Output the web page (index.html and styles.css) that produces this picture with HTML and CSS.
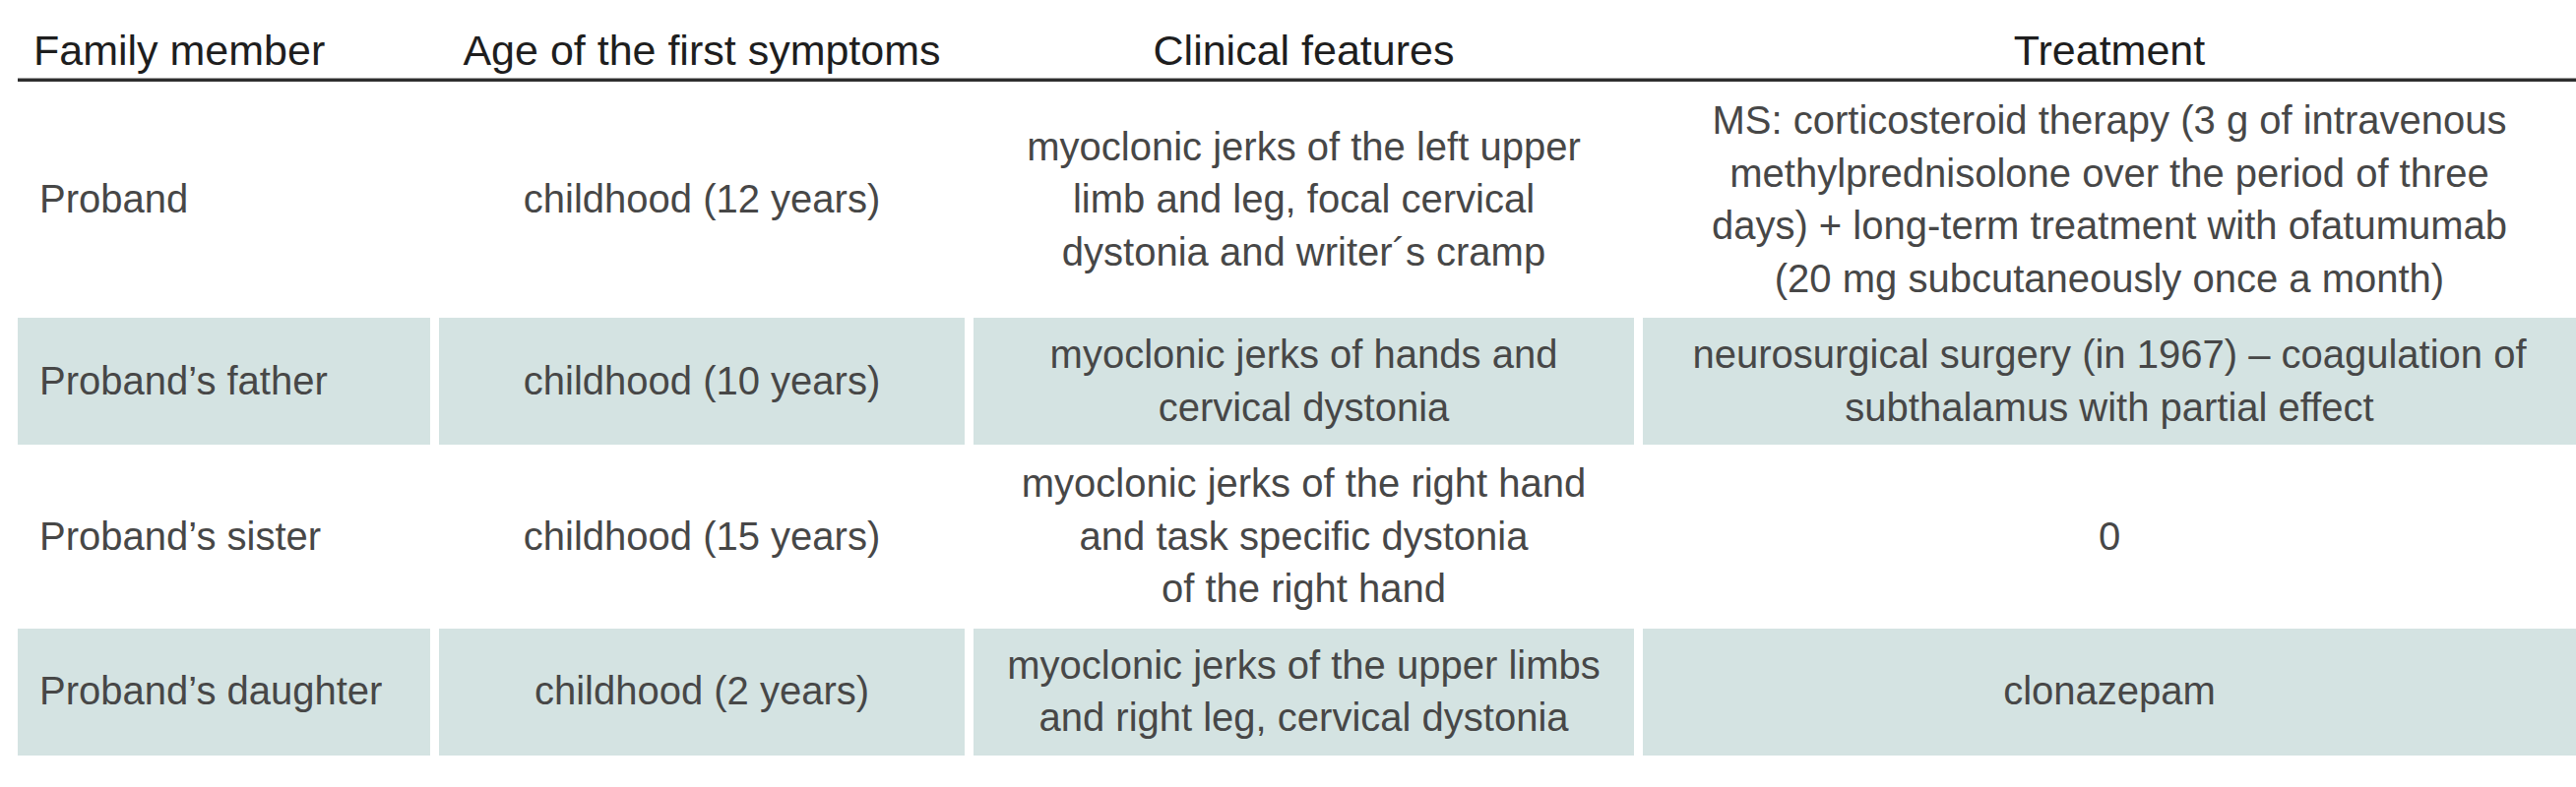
FILE: index.html
```html
<!DOCTYPE html>
<html lang="en">
<head>
<meta charset="utf-8">
<title>Family members</title>
<link rel="stylesheet" href="styles.css">
</head>
<body>
<div class="table">
  <div class="th first">Family member</div>
  <div class="th">Age of the first symptoms</div>
  <div class="th">Clinical features</div>
  <div class="th">Treatment</div>
  <div class="rule"></div>

  <div class="td first">Proband</div>
  <div class="td">childhood (12 years)</div>
  <div class="td">myoclonic jerks of the left upper<br>limb and leg, focal cervical<br>dystonia and writer´s cramp</div>
  <div class="td">MS: corticosteroid therapy (3 g of intravenous<br>methylprednisolone over the period of three<br>days) + long-term treatment with ofatumumab<br>(20 mg subcutaneously once a month)</div>

  <div class="td first alt">Proband’s father</div>
  <div class="td alt">childhood (10 years)</div>
  <div class="td alt">myoclonic jerks of hands and<br>cervical dystonia</div>
  <div class="td alt">neurosurgical surgery (in 1967) – coagulation of<br>subthalamus with partial effect</div>

  <div class="td first">Proband’s sister</div>
  <div class="td">childhood (15 years)</div>
  <div class="td">myoclonic jerks of the right hand<br>and task specific dystonia<br>of the right hand</div>
  <div class="td">0</div>

  <div class="td first alt">Proband’s daughter</div>
  <div class="td alt">childhood (2 years)</div>
  <div class="td alt">myoclonic jerks of the upper limbs<br>and right leg, cervical dystonia</div>
  <div class="td alt">clonazepam</div>
</div>
</body>
</html>
```

FILE: styles.css
```css
html, body {
  margin: 0;
  padding: 0;
  background: #ffffff;
}

body {
  font-family: "Liberation Sans", Arial, sans-serif;
}

.table {
  display: grid;
  grid-template-columns: 419px 534px 671px 948px;
  column-gap: 9px;
  row-gap: 2px;
  margin-left: 18px;
  width: 2599px;
}

.th {
  padding-top: 26px;
  font-size: 43px;
  line-height: 51px;
  color: #1e1e1e;
  text-align: center;
  white-space: nowrap;
}

.th.first {
  text-align: left;
  padding-left: 16px;
}

.rule {
  grid-column: 1 / -1;
  height: 4px;
  background: #2e2e2e;
  border-top: 1px solid #a0a0a0;
  box-sizing: border-box;
}

.td {
  display: flex;
  align-items: center;
  justify-content: center;
  text-align: center;
  padding: 11px 10px;
  font-size: 40px;
  line-height: 53.5px;
  color: #474747;
  white-space: nowrap;
}

.td.first {
  justify-content: flex-start;
  text-align: left;
  padding-left: 22px;
}

.td.alt {
  background: #d4e3e2;
}
```
